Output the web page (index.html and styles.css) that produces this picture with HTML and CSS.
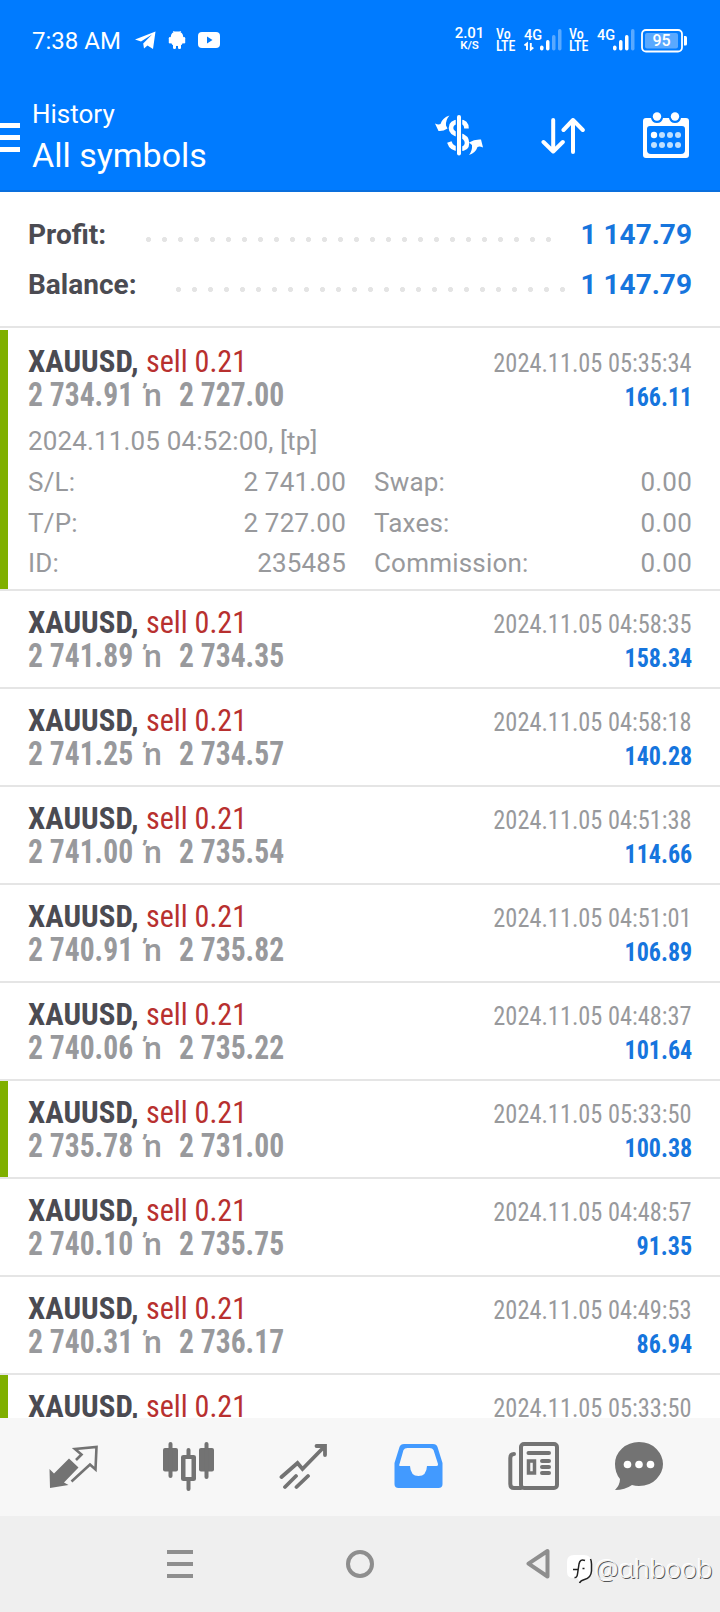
FILE: index.html
```html
<!DOCTYPE html>
<html lang="en">
<head>
<meta charset="utf-8">
<title>History</title>
<link rel="stylesheet" href="styles.css">
</head>
<body>
<div class="screen">
  <header class="header">
    <div class="status">
      <span class="clock">7:38 AM</span>
      <svg class="status-icons" width="88" height="22" viewBox="0 0 88 22" fill="#fff">
        <path d="M0 10.500 20.500 2.500 18 20 12.500 16.500 9 19.500 8.200 14.500 17 5.500 6 12.500Z"/>
        <path d="M35.700 9Q35.700 4.500 38.500 3.200L37.800 2 39.800 2.600H44.200L46.200 2 45.500 3.200Q48.300 4.500 48.300 9V12Q48.300 17 42 17T35.700 12Z"/>
        <rect x="33.800" y="8" width="2.500" height="6.500" rx="1.200"/><rect x="47.700" y="8" width="2.500" height="6.500" rx="1.200"/>
        <rect x="38" y="13" width="3" height="7" rx="1.200"/><rect x="43" y="13" width="3" height="7" rx="1.200"/>
        <rect x="63" y="3" width="22" height="16" rx="4"/><path fill="#007bff" d="M72 7.500 77.500 11 72 14.500Z"/>
      </svg>
      <span class="speed"><b>2.01</b><small>K/S</small></span>
      <span class="volte">Vo<br>LTE</span>
      <svg class="signal-a" width="38" height="23" viewBox="0 0 38 23" fill="#fff">
        <text x="0" y="11" class="net">4G</text>
        <path d="M3 21V14.500L.5 16.500M6.800 14V20.500L9.300 18.500" fill="none" stroke="#fff" stroke-width="1.900"/>
        <rect x="16" y="16.500" width="3.500" height="5" rx="1.700"/><rect x="22" y="11" width="3.500" height="10.500" rx="1.700"/>
        <g opacity=".35"><rect x="28" y="6" width="3.500" height="15.500" rx="1.700"/><rect x="34" y="0" width="3.500" height="21.500" rx="1.700"/></g>
      </svg>
      <span class="volte">Vo<br>LTE</span>
      <svg class="signal-b" width="38" height="23" viewBox="0 0 38 23" fill="#fff">
        <text x="0" y="11" class="net">4G</text>
        <rect x="16" y="16.500" width="3.500" height="5" rx="1.700"/><rect x="22" y="11" width="3.500" height="10.500" rx="1.700"/>
        <rect x="28" y="6" width="3.500" height="15.500" rx="1.700"/><rect x="34" y="0" width="3.500" height="21.500" rx="1.700" opacity=".35"/>
      </svg>
      <svg class="battery" width="47" height="24" viewBox="0 0 47 24">
        <rect x="1" y="1" width="40" height="21.500" rx="4" fill="none" stroke="#fff" stroke-width="1.800"/>
        <rect x="4" y="4" width="33" height="15.500" rx="2" fill="#5aa9ff"/>
        <path d="M43 7H44.500Q46 7 46 8.500V15Q46 16.500 44.500 16.500H43Z" fill="#fff"/>
        <text x="20.500" y="17.200" text-anchor="middle" class="pct">95</text>
      </svg>
    </div>
    <div class="appbar">
      <svg class="burger" width="20" height="30" viewBox="0 0 20 30" fill="#fff"><path d="M0 0H20V5H0ZM0 12H20V17H0ZM0 24H20V29H0Z"/></svg>
      <div class="titles"><div class="subtitle">History</div><div class="title">All symbols</div></div>
      <svg class="icon-cash" width="50" height="42" viewBox="0 0 50 42">
        <path d="M31.500 13.500Q31.500 6.800 24.500 6.800Q16 6.800 16 13Q16 18 24 20Q32 22 32 28Q32 34 24.500 34Q16.500 34 14.300 27" fill="none" stroke="#fff" stroke-width="4.600"/>
        <path d="M24 0V41" stroke="#007bff" stroke-width="6.500"/><path d="M24 2V38.500" stroke="#fff" stroke-width="4" stroke-linecap="round"/>
        <g fill="#fff"><path d="M0 8.500Q3.500 10 5.500 9Q7.500 2.500 14.500.5Q10.500 5 11 10.500L12.500 13.500Q8 16.500 3.500 16Z"/><path d="M48 32.500Q44.500 31 42.500 32Q40.500 38 34 40Q37.500 35.500 37 30L34 27.500Q39.500 24 46 24.500Z"/></g>
      </svg>
      <svg class="icon-sort" width="46" height="38" viewBox="0 0 46 38" fill="none" stroke="#fff" stroke-width="4" stroke-linecap="round" stroke-linejoin="round"><path d="M12.200 3V34M2.500 25 12.200 34.500 21.800 25M32 35V3M22.500 13 32 3 41.800 13"/></svg>
      <svg class="icon-cal" width="46" height="47" viewBox="0 0 46 47" fill="#fff">
        <path fill-rule="evenodd" d="M3 6H8Q9 11 14 11Q19 11 20 6H26Q27 11 32 11Q37 11 38 6H43Q46 6 46 9V43Q46 46 43 46H3Q0 46 0 43V9Q0 6 3 6ZM7 14Q4 14 4 17V38Q4 42 8 42H38Q42 42 42 38V17Q42 14 39 14Z"/>
        <circle cx="14" cy="4.500" r="4.200"/><circle cx="32" cy="4.500" r="4.200"/>
        <circle cx="11" cy="23" r="3.200"/><g fill="#bfe0ff"><circle cx="19" cy="23" r="3"/><circle cx="27" cy="23" r="3"/><circle cx="35" cy="23" r="3"/><circle cx="11" cy="33" r="3"/><circle cx="19" cy="33" r="3"/><circle cx="27" cy="33" r="3"/><circle cx="35" cy="33" r="3"/></g>
      </svg>
    </div>
  </header>

  <section class="summary">
    <div class="total"><span class="label-profit">Profit:</span><i class="dots dots-profit"></i><span class="amount">1 147.79</span></div>
    <div class="total"><span class="label-balance">Balance:</span><i class="dots dots-balance"></i><span class="amount">1 147.79</span></div>
  </section>

  <main class="deals">
    <article class="deal marked open">
      <div class="line"><span class="symbol">XAUUSD,</span><span class="side">sell 0.21</span><span class="time">2024.11.05 05:35:34</span></div>
      <div class="line"><span class="price">2 734.91</span><span class="arrow">ŉ</span><span class="price close">2 727.00</span><span class="profit">166.11</span></div>
      <div class="opened">2024.11.05 04:52:00, [tp]</div>
      <div class="details">
        <div><span>S/L:</span><span>2 741.00</span></div><div><span>Swap:</span><span>0.00</span></div>
        <div><span>T/P:</span><span>2 727.00</span></div><div><span>Taxes:</span><span>0.00</span></div>
        <div><span>ID:</span><span>235485</span></div><div><span>Commission:</span><span>0.00</span></div>
      </div>
    </article>
    <article class="deal">
      <div class="line"><span class="symbol">XAUUSD,</span><span class="side">sell 0.21</span><span class="time">2024.11.05 04:58:35</span></div>
      <div class="line"><span class="price">2 741.89</span><span class="arrow">ŉ</span><span class="price close">2 734.35</span><span class="profit">158.34</span></div>
    </article>
    <article class="deal">
      <div class="line"><span class="symbol">XAUUSD,</span><span class="side">sell 0.21</span><span class="time">2024.11.05 04:58:18</span></div>
      <div class="line"><span class="price">2 741.25</span><span class="arrow">ŉ</span><span class="price close">2 734.57</span><span class="profit">140.28</span></div>
    </article>
    <article class="deal">
      <div class="line"><span class="symbol">XAUUSD,</span><span class="side">sell 0.21</span><span class="time">2024.11.05 04:51:38</span></div>
      <div class="line"><span class="price">2 741.00</span><span class="arrow">ŉ</span><span class="price close">2 735.54</span><span class="profit">114.66</span></div>
    </article>
    <article class="deal">
      <div class="line"><span class="symbol">XAUUSD,</span><span class="side">sell 0.21</span><span class="time">2024.11.05 04:51:01</span></div>
      <div class="line"><span class="price">2 740.91</span><span class="arrow">ŉ</span><span class="price close">2 735.82</span><span class="profit">106.89</span></div>
    </article>
    <article class="deal">
      <div class="line"><span class="symbol">XAUUSD,</span><span class="side">sell 0.21</span><span class="time">2024.11.05 04:48:37</span></div>
      <div class="line"><span class="price">2 740.06</span><span class="arrow">ŉ</span><span class="price close">2 735.22</span><span class="profit">101.64</span></div>
    </article>
    <article class="deal marked">
      <div class="line"><span class="symbol">XAUUSD,</span><span class="side">sell 0.21</span><span class="time">2024.11.05 05:33:50</span></div>
      <div class="line"><span class="price">2 735.78</span><span class="arrow">ŉ</span><span class="price close">2 731.00</span><span class="profit">100.38</span></div>
    </article>
    <article class="deal">
      <div class="line"><span class="symbol">XAUUSD,</span><span class="side">sell 0.21</span><span class="time">2024.11.05 04:48:57</span></div>
      <div class="line"><span class="price">2 740.10</span><span class="arrow">ŉ</span><span class="price close">2 735.75</span><span class="profit">91.35</span></div>
    </article>
    <article class="deal">
      <div class="line"><span class="symbol">XAUUSD,</span><span class="side">sell 0.21</span><span class="time">2024.11.05 04:49:53</span></div>
      <div class="line"><span class="price">2 740.31</span><span class="arrow">ŉ</span><span class="price close">2 736.17</span><span class="profit">86.94</span></div>
    </article>
    <article class="deal marked">
      <div class="line"><span class="symbol">XAUUSD,</span><span class="side">sell 0.21</span><span class="time">2024.11.05 05:33:50</span></div>
    </article>
  </main>

  <nav class="tabs">
    <svg width="50" height="50" viewBox="0 0 50 50" fill="#737373"><path d="M.500 27 5 31.500 20 16.500 29.500 25.500 15 40.500 19.500 43 1 46Z"/><path d="M27 18 32.500 12.500 26 7 47.500 5 46.500 27.500 41 22.500 22.500 39.500" fill="none" stroke="#737373" stroke-width="2.600"/></svg>
    <svg width="52" height="50" viewBox="0 0 52 50" fill="#737373"><rect x="0" y="6" width="15" height="23.500" rx="2"/><rect x="5.500" y="0" width="4" height="36" rx="2"/><rect x="36" y="6" width="15" height="23.500" rx="2"/><rect x="41.500" y="0" width="4" height="37" rx="2"/><path d="M23.500 13V8Q23.500 6 25.500 6T27.500 8V13H30.500Q33 13 33 15V37Q33 39 30.500 39H27.500V47Q27.500 49 25.500 49T23.500 47V39H20.500Q18 39 18 37V15Q18 13 20.500 13ZM22.500 17V35H28.500V17Z" fill-rule="evenodd"/></svg>
    <svg width="50" height="50" viewBox="0 0 50 50" fill="none" stroke="#737373" stroke-width="3.800" stroke-linecap="round"><path d="M2.500 35 18.500 21 23.500 27 45 5M37.500 4H46V13M6 45 17 34M17.500 45 29 34"/></svg>
    <svg width="50" height="50" viewBox="0 0 50 50"><path d="M11 2H40Q43.500 2 44.500 5L49.500 21V42Q49.500 46 45.500 46H5.500Q1.500 46 1.500 42V21L6.500 5Q7.500 2 11 2Z" fill="#429aff"/><path d="M14.500 6H36.500Q39.500 6 40.500 8L45 22Q45.500 24 43.500 24H34Q33.500 34 25.500 34T17 24H7.500Q5.500 24 6.500 22L10.500 8Q11.500 6 14.500 6Z" fill="#f7f7f7"/></svg>
    <svg width="52" height="50" viewBox="0 0 52 50" fill="none" stroke="#737373" stroke-width="4" stroke-linecap="round"><rect x="14" y="2" width="36" height="44" rx="3"/><path d="M7 12Q3.300 12 3.300 16V42Q3.300 46 7 46H14M21.500 11H42M35 19H42M35 25H42M35 31H42"/><rect x="21.500" y="19" width="6" height="12" stroke-width="3.500"/></svg>
    <svg width="50" height="50" viewBox="0 0 50 50"><path d="M26 0Q37 0 43.500 7T50 22T43.500 37T26 44Q22 44 19 43Q12 48 2 48Q7 43 7 37Q2 31 2 22Q2 13 9 6.500T26 0Z" fill="#737373"/><g fill="#fff"><circle cx="14.500" cy="22.500" r="3.800"/><circle cx="26" cy="22.500" r="3.800"/><circle cx="37.500" cy="22.500" r="3.800"/></g></svg>
  </nav>

  <footer class="sysnav">
    <svg width="26" height="28" viewBox="0 0 26 28" fill="#8e8e8e"><path d="M0 0H26V4H0ZM0 12H26V16H0ZM0 24H26V28H0Z"/></svg>
    <svg width="28" height="28" viewBox="0 0 28 28"><circle cx="14" cy="14" r="12" fill="none" stroke="#8e8e8e" stroke-width="4"/></svg>
    <svg width="24" height="32" viewBox="0 0 24 32"><path d="M21.500 3V28.500L2.500 15.700Z" fill="none" stroke="#8e8e8e" stroke-width="4" stroke-linejoin="round"/></svg>
    <div class="watermark">
      <svg width="27" height="30" viewBox="0 0 27 30"><path d="M7 0H17Q24 0 24 7V16Q24 23 17 24L13 27L10 23H7Q0 23 0 17V7Q0 0 7 0Z" fill="#fff"/><path d="M23.500 4Q24.500 6 24.500 9V16Q24 23 17.500 24.500Q13.500 25.500 12.500 28M18 5.500Q13 3.500 12 9L10.500 19Q10 23 7.500 22.500M6 14.500H11.500M15.500 13.500H17.500" fill="none" stroke="#222" stroke-width="1.500"/></svg>
      <span>@ɑhboob</span>
    </div>
  </footer>
</div>
</body>
</html>
```
FILE: styles.css
```css
* { box-sizing: border-box; }
body { margin: 0; background: #fff; font-family: Roboto, "Liberation Sans", sans-serif; }
svg { display: block; flex: none; }
.screen { width: 720px; height: 1612px; display: flex; flex-direction: column; overflow: hidden; background: #fff; }

.header { height: 192px; flex: none; background: #007bff; border-bottom: 2px solid #0a6fdd; color: #fff; }
.status { height: 80px; display: flex; align-items: flex-start; padding: 26px 0 0 32px; }
.clock { width: 103px; font-size: 24px; line-height: 30px; white-space: nowrap; }
.status-icons { margin-top: 3px; }
.speed { width: 27px; margin: 0 13px 0 233px; display: flex; flex-direction: column; align-items: center; font-size: 15px; line-height: 14px; }
.speed b { font-weight: 500; }
.speed small { font-size: 11.500px; line-height: 11px; font-weight: 600; }
.volte { width: 20px; margin: 2px 8px 0 0; font-size: 14px; line-height: 12px; font-weight: 500; font-stretch: 85%; }
.signal-a { margin: 3px 7px 0 0; overflow: visible; }
.signal-b { margin: 3px 6px 0 0; overflow: visible; }
.battery { margin-top: 3px; }
.net { font-family: Roboto; font-size: 14.500px; font-weight: 500; font-stretch: 88%; }
.pct { font: 500 16px Roboto; fill: #fff; }

.appbar { height: 110px; display: flex; align-items: flex-start; padding-top: 17px; }
.burger { margin: 26px 12px 0 0; }
.titles { width: 403px; }
.subtitle { font-size: 26px; line-height: 34px; }
.title { font-size: 34px; line-height: 48px; }
.icon-cash { margin-top: 18px; }
.icon-sort { margin: 20px 0 0 56px; }
.icon-cal { margin: 15px 0 0 56px; }

.summary { height: 136px; flex: none; padding: 18px 28px 0; border-bottom: 2px solid #e5e5e5; }
.total { height: 50px; display: flex; align-items: center; font-size: 28px; font-weight: 700; line-height: 50px; color: #4b4b52; }
.amount { margin-left: auto; color: #1675dd; }
.label-profit { width: 118px; }
.label-balance { width: 148px; }
.dots { height: 5px; margin-top: 9px; background: radial-gradient(circle at 2.500px 2.500px, #e4e4e4 2.200px, transparent 2.900px) 0 0 / 16px 5px repeat-x; }
.dots-profit { width: 405px; }
.dots-balance { width: 389px; }

.deals { height: 1090px; flex: none; overflow: hidden; padding-top: 2px; }
.deal { height: 98px; padding: 11px 28px 0; border-bottom: 2px solid #e5e5e5; background: #fff; }
.deal.open { height: 261px; }
.marked { background: linear-gradient(90deg, #7faf00 8px, #fff 8px); }
.line { display: flex; height: 34px; line-height: 40px; font-size: 32px; white-space: nowrap; font-stretch: 75%; }
.line span { transform-origin: left; }
.symbol { width: 118px; font-weight: 700; color: #4b4b52; transform: scaleX(.965); }
.side { color: #b8302f; transform: scaleX(.94); }
.line .time, .line .profit { margin-left: auto; font-size: 26px; line-height: 44px; transform-origin: right; }
.time { color: #98999c; transform: scaleX(.937); }
.line .price { width: 111px; font-size: 32.500px; font-weight: 700; color: #98999c; transform: scaleX(.91); }
.arrow { width: 40px; padding-left: 5px; color: #98999c; font-weight: 500; font-stretch: 100%; }
.profit { font-weight: 700; color: #1675dd; transform: scaleX(.925); }
.opened { margin-top: 11px; font-size: 26px; line-height: 42px; color: #98999c; letter-spacing: .15px; }
.details { display: grid; grid-template-columns: 318px 318px; column-gap: 28px; font-size: 26px; line-height: 40.600px; color: #98999c; letter-spacing: .2px; }
.details div { display: flex; justify-content: space-between; }

.tabs { height: 98px; flex: none; background: #f7f7f7; display: flex; align-items: flex-start; gap: 64px; padding: 24px 0 0 49px; }
.tabs svg:last-child { margin-left: -10px; }
.sysnav { height: 96px; flex: none; background: #efefef; display: flex; align-items: center; position: relative; padding-left: 167px; }
.sysnav > svg:nth-child(2) { margin-left: 153px; }
.sysnav > svg:nth-child(3) { margin-left: 152px; }
.watermark { position: absolute; left: 567px; top: 39px; display: flex; color: #f4f4f4; }
.watermark span { margin-left: 1px; font: 300 26.500px/27px "Open Sans", "Noto Sans", sans-serif; text-shadow: 1px 1px 0 #555, -1px -1px 0 #fff; }
```
